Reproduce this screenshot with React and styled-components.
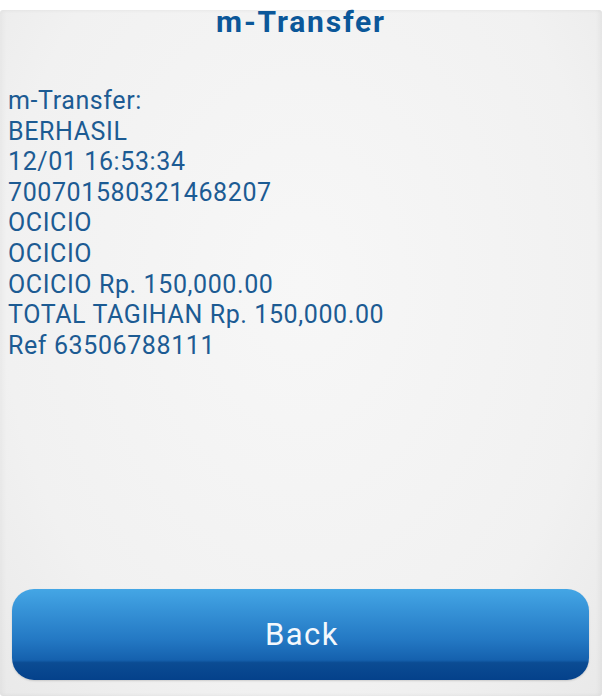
import React from "react";
import styled, { createGlobalStyle } from "styled-components";

const Global = createGlobalStyle`
  html, body { margin: 0; padding: 0; background: #ffffff; }
  body { font-family: Roboto, "Noto Sans", sans-serif; }
`;

const Page = styled.div`
  width: 612px;
  height: 700px;
  box-sizing: border-box;
  padding: 10px 10px 4px 0;
  display: flex;
`;

const Panel = styled.div`
  flex: 1;
  display: flex;
  flex-direction: column;
  background: radial-gradient(ellipse at 50% 40%, #f7f7f7 0%, #f1f1f1 70%, #e9e9e9 100%);
  box-shadow: inset -3px 0 4px rgba(0,0,0,0.04), inset 3px 0 4px rgba(0,0,0,0.03);
  border-radius: 3px;
`;

const Title = styled.h1`
  margin: 0;
  text-align: center;
  font-family: Roboto, sans-serif;
  font-weight: 700;
  font-size: 30px;
  letter-spacing: 1.8px;
  line-height: 24px;
  color: #0b5799;
  padding-left: 0;
`;

const Body = styled.div`
  flex: 1;
  padding: 52px 0 0 8px;
  display: flex;
  flex-direction: column;
`;

const Line = styled.div`
  font-family: Roboto, sans-serif;
  font-size: 25px;
  letter-spacing: 0.6px;
  line-height: 30.6px;
  color: #1c5b93;
  white-space: nowrap;
`;

const Footer = styled.div`
  padding: 0 13px 16px 12px;
`;

const BackButton = styled.button`
  width: 100%;
  height: 91px;
  border: none;
  border-radius: 22px;
  background: linear-gradient(to bottom, #44a6e5 0%, #3591d6 25%, #2479c4 55%, #1561ae 78%, #0b4c93 81%, #04418b 100%);
  box-shadow: 0 1px 2px rgba(0,0,0,0.15);
  color: #f4f8fc;
  font-family: Roboto, sans-serif;
  font-size: 31px;
  letter-spacing: 1.5px;
  font-weight: 400;
  display: flex;
  align-items: center;
  justify-content: center;
  padding: 0 0 0 3px;
  cursor: pointer;
`;

const lines = [
  "m-Transfer:",
  "BERHASIL",
  "12/01 16:53:34",
  "700701580321468207",
  "OCICIO",
  "OCICIO",
  "OCICIO Rp. 150,000.00",
  "TOTAL TAGIHAN Rp. 150,000.00",
  "Ref 63506788111",
];

export default function App() {
  return (
    <>
      <Global />
      <Page>
        <Panel>
          <Title>m-Transfer</Title>
          <Body>
            {lines.map((l, i) => (
              <Line key={i}>{l}</Line>
            ))}
          </Body>
          <Footer>
            <BackButton>Back</BackButton>
          </Footer>
        </Panel>
      </Page>
    </>
  );
}
